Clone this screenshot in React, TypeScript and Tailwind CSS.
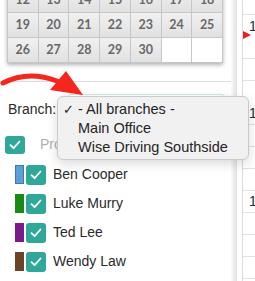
import React from "react";

const weeks: (number | null)[][] = [
  [12, 13, 14, 15, 16, 17, 18],
  [19, 20, 21, 22, 23, 24, 25],
  [26, 27, 28, 29, 30, null, null],
];

const staff = [
  { name: "Ben Cooper", bar: "bg-[#5e9fd8] border border-[#3a78bd]" },
  { name: "Luke Murry", bar: "bg-[#168c16]" },
  { name: "Ted Lee", bar: "bg-[#7b1a8b]" },
  { name: "Wendy Law", bar: "bg-[#6b4426]" },
];

// y-slots of the day column: height, bottom line, hour label
const slots = [
  { h: "h-[15px]", line: true, label: false },
  { h: "h-[22px]", line: false, label: true },
  { h: "h-[22px]", line: true, label: false },
  { h: "h-[22px]", line: true, label: false },
  { h: "h-[22px]", line: false, label: false },
  { h: "h-[22px]", line: true, label: true },
  { h: "h-[22px]", line: true, label: false },
  { h: "h-[22px]", line: true, label: false },
  { h: "h-[22px]", line: true, label: false },
  { h: "h-[22px]", line: true, label: true },
  { h: "h-[22px]", line: true, label: false },
  { h: "h-[22px]", line: true, label: false },
  { h: "h-[22px]", line: true, label: false },
];

function Check({ size = "w-[20px] h-[20px]" }: { size?: string }) {
  return (
    <div className={`${size} rounded-[3px] bg-[#2fa799] flex items-center justify-center shrink-0`}>
      <svg width="12" height="10" viewBox="0 0 12 10" fill="none">
        <path d="M1.5 5.2 L4.6 8.2 L10.5 1.5" stroke="white" strokeWidth="1.8" strokeLinecap="round" strokeLinejoin="round" />
      </svg>
    </div>
  );
}

export default function App() {
  return (
    <div
      className="relative w-[255px] h-[281px] overflow-hidden bg-white flex text-[14px] text-[#2a2a2a]"
      style={{ fontFamily: '"Liberation Sans", Arial, sans-serif' }}
    >
      <div className="w-[231px] shrink-0 flex flex-col">
        <div
          className="-mt-[13px] ml-[7px] w-[216px] grid grid-cols-7 border-l border-t border-[#c6c6c6] shadow-[0_2px_4px_rgba(0,0,0,0.3)]"
          style={{ fontFamily: "Lato, sans-serif" }}
        >
          {weeks.flat().map((d, i) => (
            <div
              key={i}
              className={`h-[25px] border-r border-b border-[#c6c6c6] flex items-center justify-center text-[12.5px] font-bold text-[#686868] ${
                d === null ? "bg-white" : "bg-gradient-to-b from-[#f1f1f1] to-[#e1e1e1]"
              }`}
            >
              {d}
            </div>
          ))}
        </div>

        <div className="mt-[18px] ml-[5px] border-t border-[#dddddd]" />

        <div className="mt-[12px] flex items-center pl-[8px]">
          <span>Branch:</span>
          <div className="ml-[11px] w-[158px] h-[31px] border border-[#cfe7e3] rounded-[3px]" />
        </div>

        <div className="mt-[10px] flex items-center pl-[5px] h-[19px]">
          <Check size="w-[20px] h-[18px]" />
          <span className="ml-[15px] text-[#b0b0b0]">Providers</span>
        </div>

        <div className="mt-[6px] flex flex-col">
          {staff.map((s) => (
            <div key={s.name} className="h-[29px] flex items-center pl-[15px]">
              <div className={`w-[9px] h-[19px] ${s.bar}`} />
              <div className="ml-[2px]">
                <Check />
              </div>
              <span className="ml-[7px]">{s.name}</span>
            </div>
          ))}
        </div>
      </div>

      <div className="w-[6px] shrink-0 bg-gradient-to-r from-[#fbfbfb] to-[#e2e2e2]" />
      <div className="w-[5px] shrink-0" />

      <div className="relative flex-1 border-l border-[#dcdcdc] flex flex-col">
        {slots.map((s, i) => (
          <div
            key={i}
            className={`${s.h} shrink-0 pl-[6px] flex items-center ${s.line ? "border-b border-[#e2e2e2]" : ""}`}
          >
            {s.label ? "1" : ""}
          </div>
        ))}
        <div className="absolute left-0 top-[31px] w-0 h-0 border-y-[4px] border-y-transparent border-l-[8px] border-l-[#ee1c25]" />
      </div>

      <svg className="absolute left-0 top-0" width="100" height="110" viewBox="0 0 100 110">
        <path d="M3 83 Q28 70 57 81" stroke="#f5261c" strokeWidth="5" fill="none" strokeLinecap="round" />
        <polygon points="66,71 50,90 83,95" fill="#f5261c" />
      </svg>

      <div className="absolute left-[57px] top-[96px] w-[192px] h-[64px] rounded-[6px] bg-[#f1f1f1] border border-[#cacaca] shadow-[0_4px_12px_rgba(0,0,0,0.15)] pt-[3px] text-[14.5px] text-[#242424] leading-[19px]">
        <div className="flex">
          <span className="w-[20px] pl-[5px] text-[13px]">✓</span>
          <span>- All branches -</span>
        </div>
        <div className="pl-[20px]">Main Office</div>
        <div className="pl-[20px]">Wise Driving Southside</div>
      </div>
    </div>
  );
}
